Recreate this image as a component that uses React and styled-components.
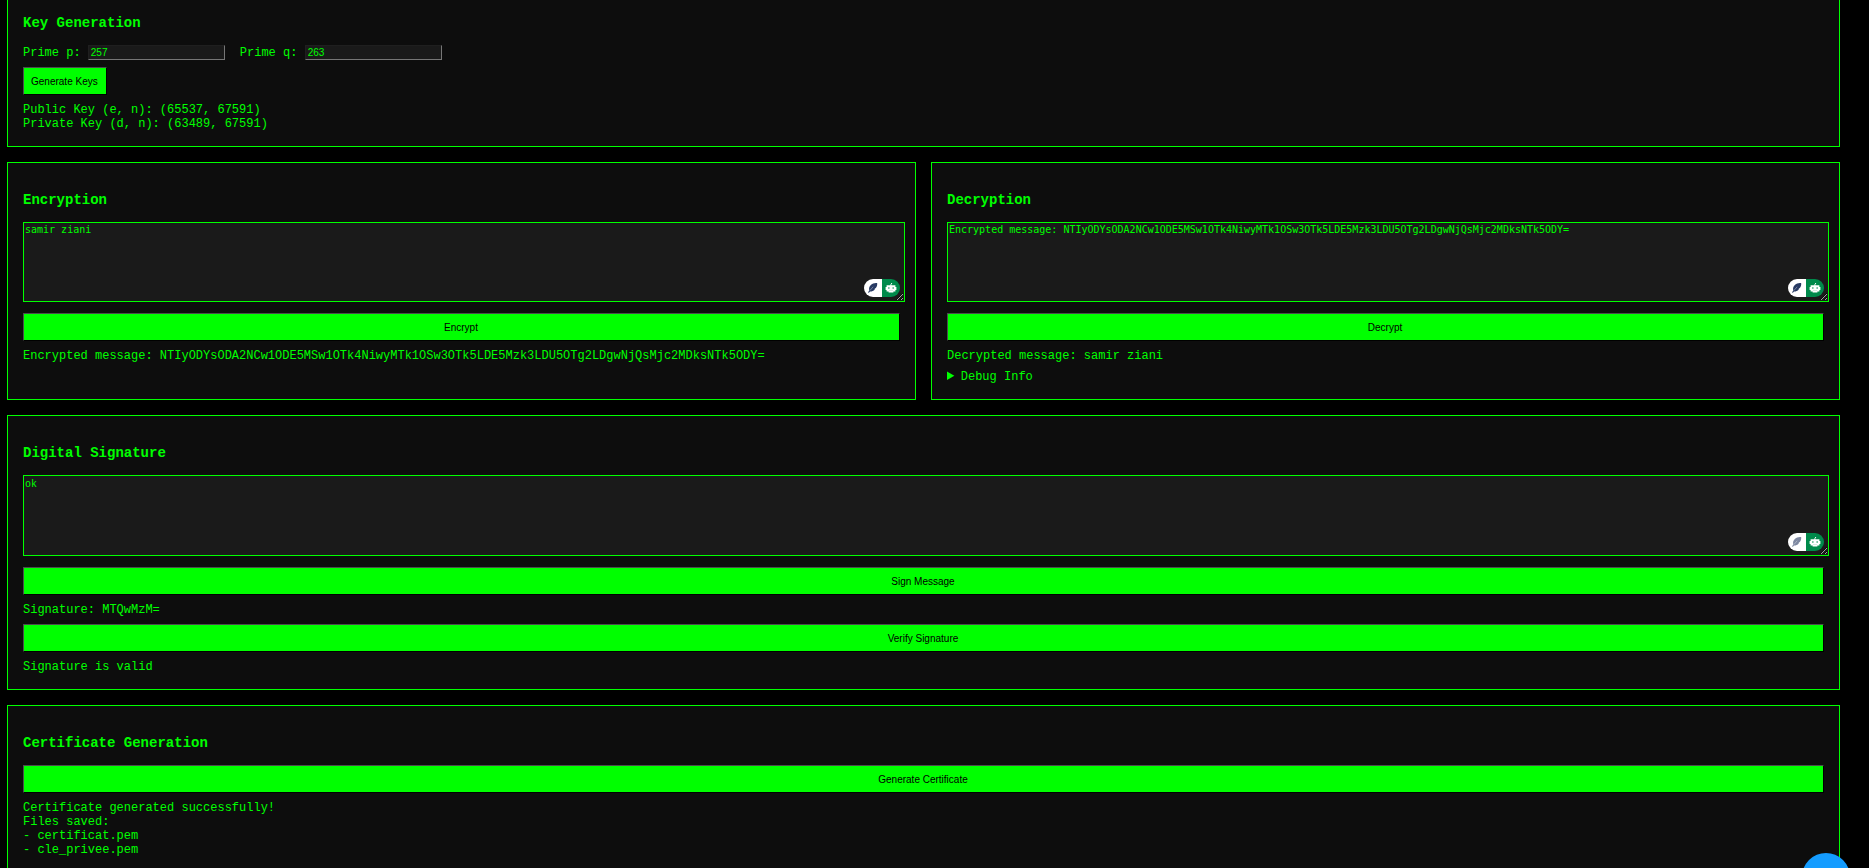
import React from "react";
import styled, { createGlobalStyle } from "styled-components";

const GlobalStyle = createGlobalStyle`
  html {
    background: #000;
    scrollbar-width: none;
  }
  body {
    margin: 0;
    color: #00ff00;
    font: 12px/14px "Liberation Mono", monospace;
  }
`;

const Page = styled.main`
  display: flex;
  flex-direction: column;
  gap: 15px;
  padding: 0 29px 15px 7px;
`;

const Columns = styled.div`
  display: grid;
  grid-template-columns: 1fr 1fr;
  gap: 15px;
`;

const Panel = styled.section`
  min-width: 0;
  padding: 15px;
  border: 1px solid #00ff00;
  background: #0d0d0d;
  ${(p) => p.$openTop && "border-top: 0; padding-top: 1px;"}
`;

const Title = styled.h3`
  margin: 0;
  padding: 14px 0;
  font-size: 14px;
  line-height: 16px;
`;

const PrimeRow = styled.div`
  display: flex;
  gap: 15px;
  margin-bottom: 7px;
`;

const PrimeLabel = styled.label`
  display: flex;
  align-items: center;
  white-space: pre;
`;

const PrimeInput = styled.input`
  box-sizing: border-box;
  width: 137px;
  height: 15px;
  padding: 0 2px;
  border: 1px solid;
  border-color: #1f1f1f #767676 #767676 #1f1f1f;
  background: #1a1a1a;
  color: #00ff00;
  font: 10px "Liberation Sans", sans-serif;
`;

const ActionButton = styled.button`
  display: block;
  width: ${(p) => (p.$compact ? "auto" : "100%")};
  margin: 0 0 8px;
  padding: 9px 8px 7px 7px;
  border: 1px solid;
  border-color: #4c4c4c #000 #000 #4c4c4c;
  background: #00ff00;
  color: #000;
  font: 10px/10px "Liberation Sans", sans-serif;
`;

const Output = styled.p`
  margin: 0;
  white-space: pre-line;
  overflow-wrap: anywhere;

  & + * {
    margin-top: 7px;
  }
`;

const DebugSummary = styled.summary`
  &::marker {
    font-size: 13px;
  }
`;

const Field = styled.div`
  position: relative;
  width: calc(100% + 5px);
  margin-bottom: 11px;
`;

const MessageBox = styled.textarea`
  display: block;
  box-sizing: border-box;
  width: 100%;
  height: ${(p) => (p.$plain ? 81 : 80)}px;
  padding: ${(p) => (p.$plain ? 2 : 1)}px 1px;
  border: 1px solid #00ff00;
  background: #1a1a1a;
  color: #00ff00;
  font-family: ${(p) => (p.$plain ? '"Liberation Mono"' : '"DejaVu Sans Mono"')}, monospace;
  font-size: 10px;
  line-height: ${(p) => (p.$plain ? 14 : 12)}px;
`;

const Badge = styled.div`
  position: absolute;
  right: 5px;
  bottom: 5px;
  display: flex;
  border-radius: 9px;
  overflow: hidden;
`;

const BadgeHalf = styled.span`
  display: flex;
  align-items: center;
  justify-content: center;
  width: 18px;
  height: 18px;
  background: ${(p) => (p.$green ? "#008a4b" : "#fff")};
`;

const ChatButton = styled.button`
  position: fixed;
  right: 19px;
  bottom: -33px;
  width: 48px;
  height: 48px;
  padding: 0;
  border: 0;
  border-radius: 50%;
  background: #149cff;
`;

function Feather({ muted }) {
  return (
    <svg width="12" height="12" viewBox="0 0 12 12" opacity={muted ? 0.6 : 1}>
      <path
        d="M10.2 1.2C8.2 0.8 5.4 1.4 3.6 3.2C2 4.9 1.8 6.8 2.3 8.2L1 10.6L1.9 10.8L3 9.4C4.6 9.5 6.4 8.9 7.8 7.4L7.5 7L9 5.8C10 4.2 10.4 2.6 10.2 1.2Z"
        fill="#283a63"
      />
      <path d="M2.8 8.6L6.2 4.8" stroke="#a9b1c2" strokeWidth="0.6" fill="none" />
    </svg>
  );
}

function Robot() {
  return (
    <svg width="12" height="12" viewBox="0 0 12 12">
      <path d="M5.9 4V2.6L6.9 1" stroke="#fff" strokeWidth="1" fill="none" />
      <path
        d="M1.6 3.2H10.4V5H11.4V8H10.4V9.6H8.4V10.4H3.6V9.6H1.6V8H0.6V5H1.6Z"
        fill="#fff"
      />
      <path d="M3 5.4H4.6V6.6H3ZM7.4 5.4H9V6.6H7.4Z" fill="#008a4b" />
      <path d="M4 8.5H8" stroke="#9fd3bb" strokeWidth="0.4" />
    </svg>
  );
}

function MessageField({ label, value, plain }) {
  return (
    <Field>
      <MessageBox aria-label={label} defaultValue={value} $plain={plain} spellCheck={false} />
      <Badge>
        <BadgeHalf>
          <Feather muted={plain} />
        </BadgeHalf>
        <BadgeHalf $green>
          <Robot />
        </BadgeHalf>
      </Badge>
    </Field>
  );
}

const CIPHER =
  "Encrypted message: NTIyODYsODA2NCw1ODE5MSw1OTk4NiwyMTk1OSw3OTk5LDE5Mzk3LDU5OTg2LDgwNjQsMjc2MDksNTk5ODY=";

export default function App() {
  return (
    <>
      <GlobalStyle />
      <Page>
        <Panel $openTop>
          <Title>Key Generation</Title>
          <PrimeRow>
            <PrimeLabel>
              {"Prime p: "}
              <PrimeInput type="text" defaultValue="257" />
            </PrimeLabel>
            <PrimeLabel>
              {"Prime q: "}
              <PrimeInput type="text" defaultValue="263" />
            </PrimeLabel>
          </PrimeRow>
          <ActionButton type="button" $compact>
            Generate Keys
          </ActionButton>
          <Output>{"Public Key (e, n): (65537, 67591)\nPrivate Key (d, n): (63489, 67591)"}</Output>
        </Panel>

        <Columns>
          <Panel>
            <Title>Encryption</Title>
            <MessageField label="Message to encrypt" value="samir ziani" />
            <ActionButton type="button">Encrypt</ActionButton>
            <Output>{CIPHER}</Output>
          </Panel>
          <Panel>
            <Title>Decryption</Title>
            <MessageField label="Message to decrypt" value={CIPHER} />
            <ActionButton type="button">Decrypt</ActionButton>
            <Output>Decrypted message: samir ziani</Output>
            <details>
              <DebugSummary>Debug Info</DebugSummary>
            </details>
          </Panel>
        </Columns>

        <Panel>
          <Title>Digital Signature</Title>
          <MessageField label="Message to sign" value="ok" plain />
          <ActionButton type="button">Sign Message</ActionButton>
          <Output>Signature: MTQwMzM=</Output>
          <ActionButton type="button">Verify Signature</ActionButton>
          <Output>Signature is valid</Output>
        </Panel>

        <Panel>
          <Title>Certificate Generation</Title>
          <ActionButton type="button">Generate Certificate</ActionButton>
          <Output>
            {"Certificate generated successfully!\nFiles saved:\n- certificat.pem\n- cle_privee.pem"}
          </Output>
        </Panel>
      </Page>
      <ChatButton type="button" aria-label="Open chat" />
    </>
  );
}
